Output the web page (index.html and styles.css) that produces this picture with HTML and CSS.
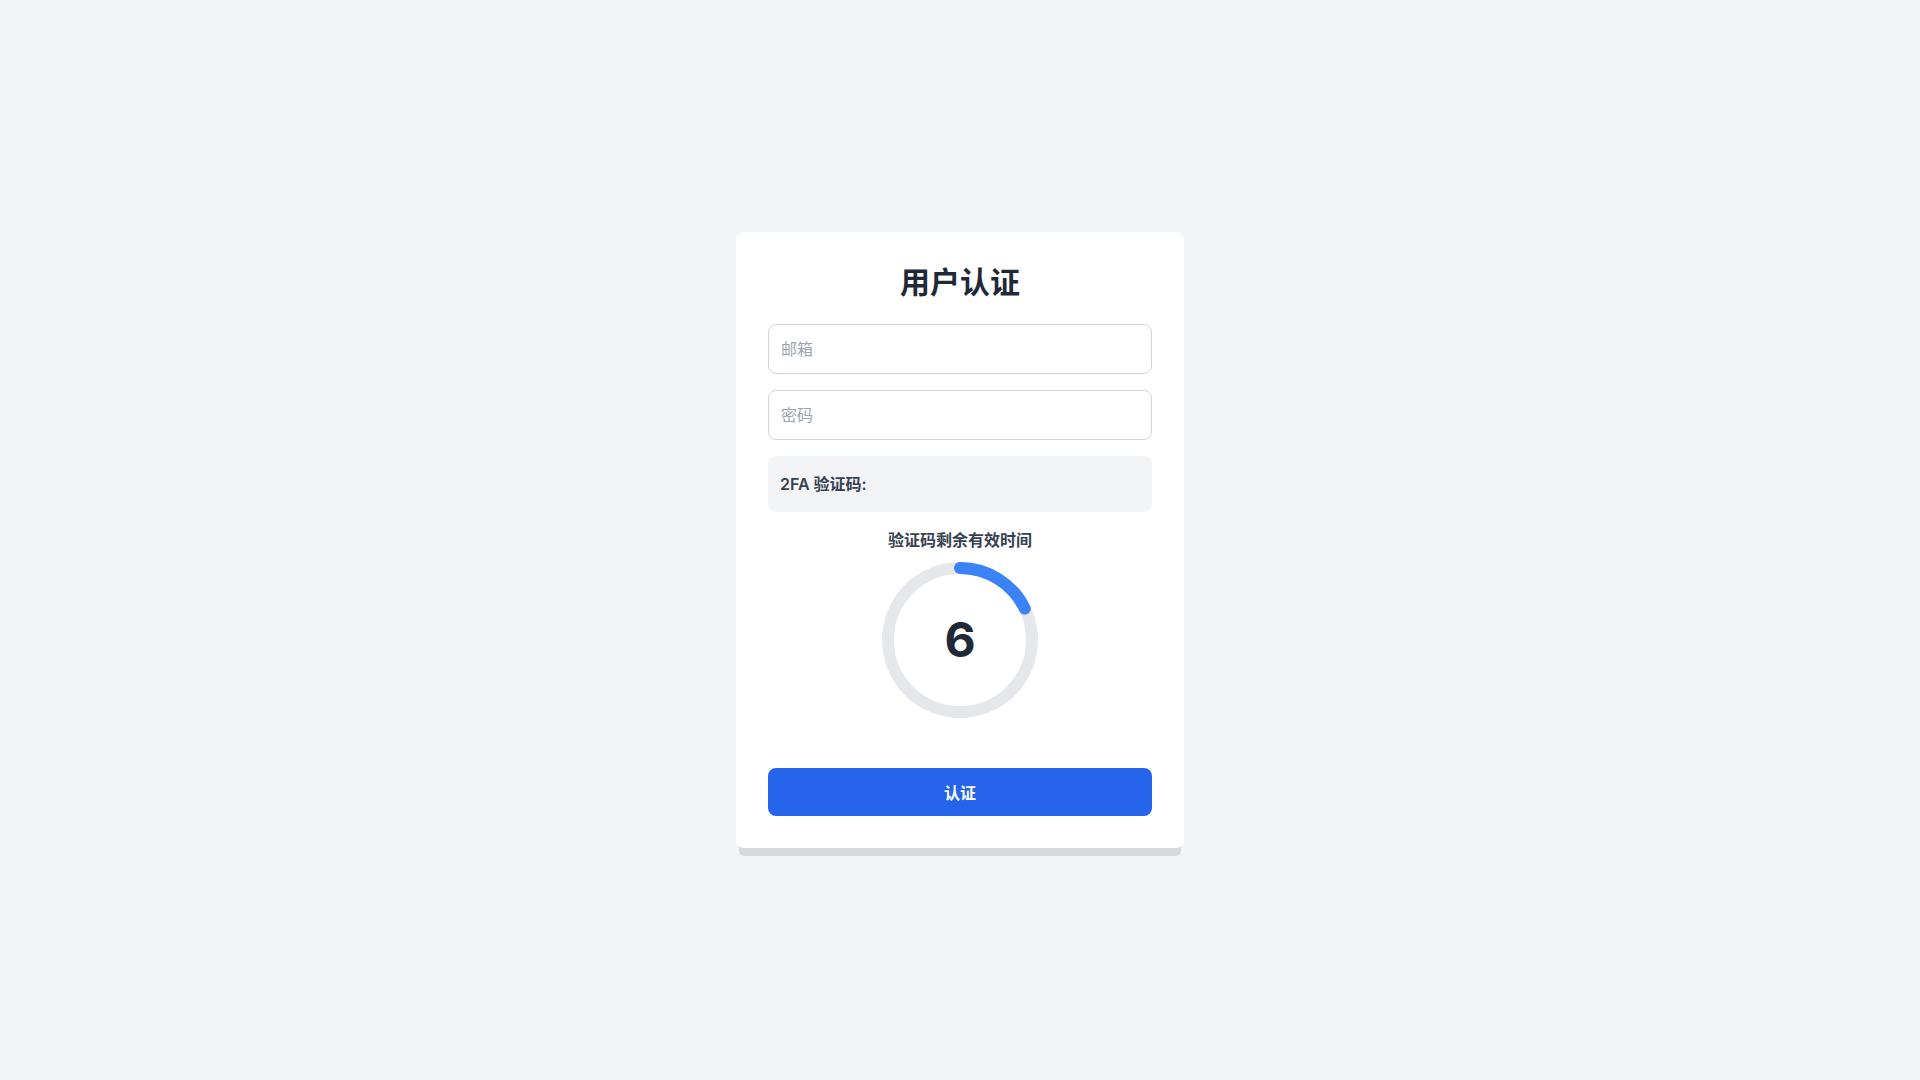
FILE: index.html
```html
<!DOCTYPE html>
<html lang="zh-CN">
<head>
<meta charset="utf-8">
<title>用户认证</title>
<link rel="stylesheet" href="styles.css">
</head>
<body>
<main class="page">
  <section class="card">
    <h1 class="title">用户认证</h1>
    <input class="field" type="email" placeholder="邮箱">
    <input class="field" type="password" placeholder="密码">
    <div class="twofa">2FA 验证码:</div>
    <div class="timer">
      <div class="timer-label">验证码剩余有效时间</div>
      <div class="ring">
        <svg class="ring-svg" width="160" height="160" viewBox="0 0 160 160">
          <circle cx="80" cy="80" r="72" fill="none" stroke="#e5e7eb" stroke-width="12"/>
          <circle cx="80" cy="80" r="72" fill="none" stroke="#3b82f6" stroke-width="12" stroke-linecap="round" stroke-dasharray="80.4 452.4" transform="rotate(-90 80 80)"/>
        </svg>
        <div class="ring-num">6</div>
      </div>
    </div>
    <button class="submit" type="button">认证</button>
  </section>
</main>
</body>
</html>
```
FILE: styles.css
```css
html, body {
  margin: 0;
  padding: 0;
}
body {
  background: #f3f4f6;
  font-family: Inter, "Noto Sans CJK SC", sans-serif;
  color: #1f2937;
}
.page {
  min-height: 100vh;
  display: flex;
  align-items: center;
  justify-content: center;
}
.card {
  width: 448px;
  box-sizing: border-box;
  padding: 32px;
  background: #ffffff;
  border-radius: 8px;
  box-shadow: 0 11px 0 -3px #d8d9dc;
  display: flex;
  flex-direction: column;
}
.title {
  margin: 0 0 24px;
  font-size: 30px;
  line-height: 36px;
  font-weight: 700;
  text-align: center;
  color: #1f2937;
}
.field {
  display: block;
  width: 100%;
  height: 50px;
  box-sizing: border-box;
  padding: 12px;
  margin: 0 0 16px;
  border: 1px solid #d1d5db;
  border-radius: 8px;
  font-family: inherit;
  font-size: 16px;
  line-height: 24px;
  color: #1f2937;
  background: #fff;
  outline: none;
}
.field::placeholder {
  color: #9ca3af;
}
.twofa {
  background: #f3f4f6;
  border-radius: 8px;
  padding: 16px 12px;
  font-size: 16px;
  line-height: 24px;
  font-weight: 600;
  color: #374151;
}
.timer {
  margin-top: 16px;
  display: flex;
  flex-direction: column;
  align-items: center;
}
.timer-label {
  font-size: 16px;
  line-height: 24px;
  font-weight: 600;
  color: #374151;
  margin-bottom: 8px;
}
.ring {
  display: grid;
  width: 160px;
  height: 160px;
}
.ring-svg,
.ring-num {
  grid-area: 1 / 1;
}
.ring-svg {
  display: block;
}
.ring-num {
  display: flex;
  align-items: center;
  justify-content: center;
  font-size: 48px;
  line-height: 1;
  font-weight: 700;
  color: #1f2937;
}
.submit {
  margin-top: 48px;
  width: 100%;
  height: 48px;
  border: none;
  border-radius: 8px;
  background: #2563eb;
  color: #ffffff;
  font-family: inherit;
  font-size: 16px;
  font-weight: 600;
  cursor: pointer;
}
```
